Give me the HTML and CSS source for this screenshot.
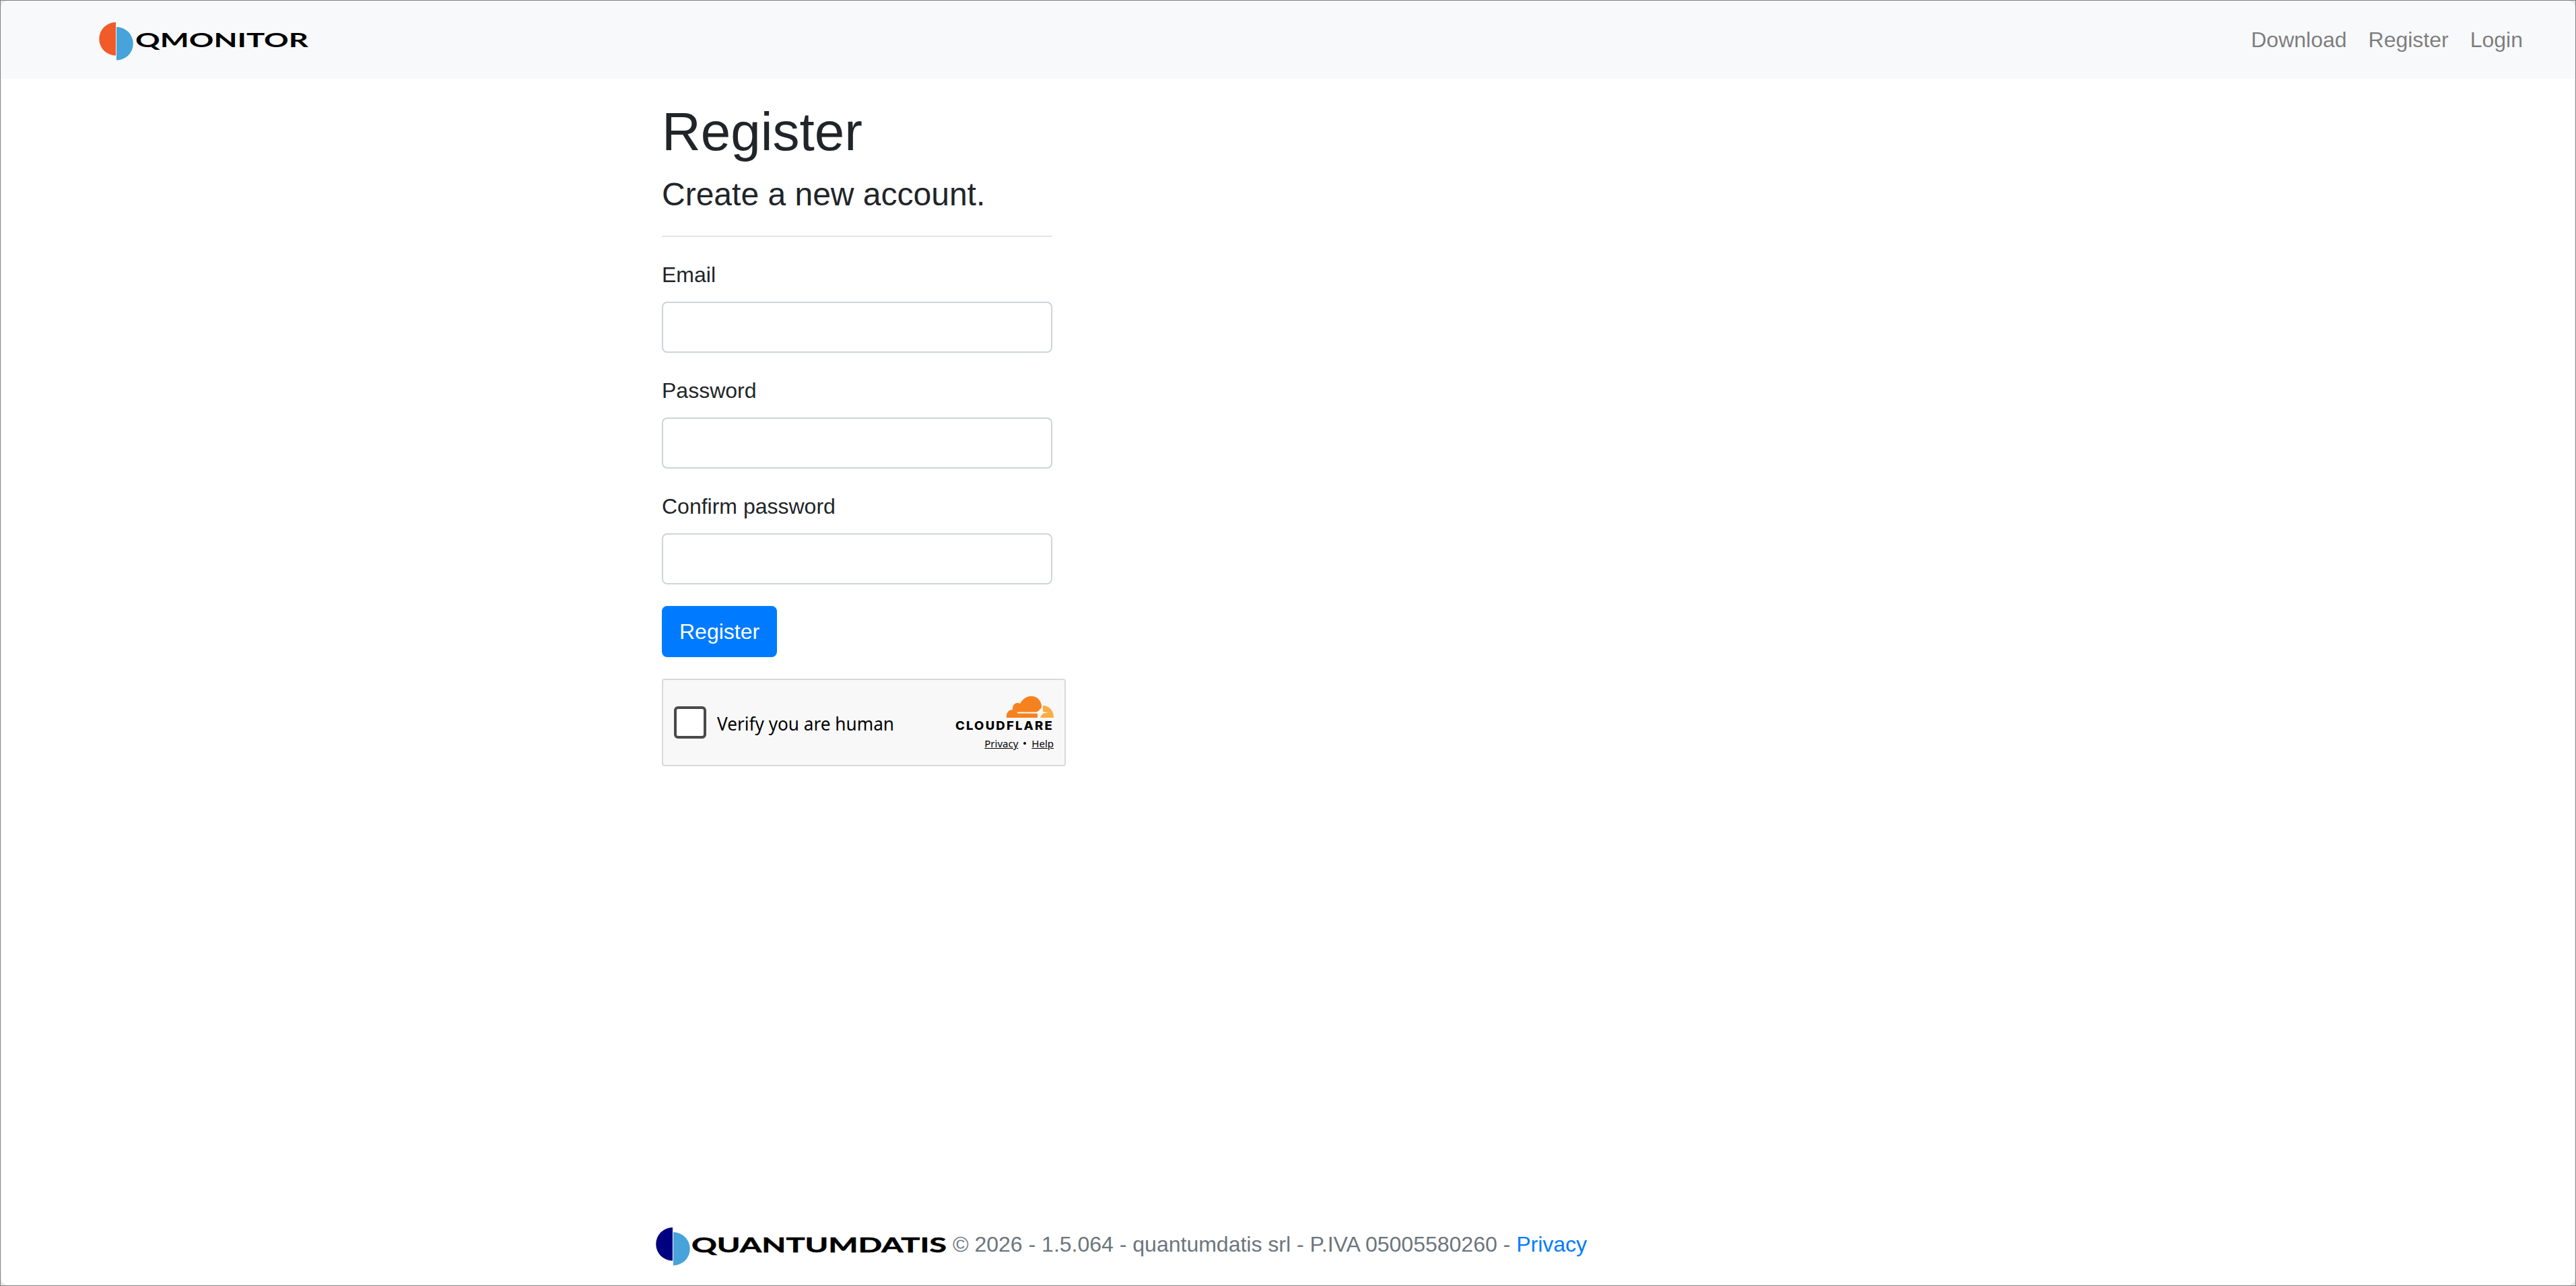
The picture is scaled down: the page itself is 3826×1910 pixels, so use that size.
FILE: index.html
```
<!DOCTYPE html>
<html lang="en">
<head>
    <meta charset="utf-8">
    <meta name="viewport" content="width=device-width, initial-scale=1">
    <title>Register</title>
    <link rel="stylesheet" href="styles.css">
</head>
<body>
    <div class="page">
        <header class="navbar">
            <a class="brand" href="#">
                <svg class="brand-logo" width="320" height="64" viewBox="0 -3.5 320 64">
                    <path d="M25 2.5A24.7 24.7 0 0 0 25 52z" fill="#f15a29"/>
                    <path d="M26 9.5A24.7 24.7 0 0 1 26 59z" fill="#47a3d9"/>
                    <text class="logo-text logo-text-light" x="54" y="39.5" textLength="257" lengthAdjust="spacingAndGlyphs">QMONITOR</text>
                </svg>
            </a>
            <nav class="nav">
                <a class="nav-link" href="#">Download</a>
                <a class="nav-link" href="#">Register</a>
                <a class="nav-link" href="#">Login</a>
            </nav>
        </header>

        <main class="container main">
            <h1>Register</h1>
            <form class="register-form">
                <h4>Create a new account.</h4>
                <hr>
                <div class="form-group">
                    <label for="email">Email</label>
                    <input class="form-control" type="email" id="email">
                </div>
                <div class="form-group">
                    <label for="password">Password</label>
                    <input class="form-control" type="password" id="password">
                </div>
                <div class="form-group">
                    <label for="confirm">Confirm password</label>
                    <input class="form-control" type="password" id="confirm">
                </div>
                <button type="button" class="btn">Register</button>
            </form>

            <!-- Human check -->
            <div class="turnstile">
                <label class="verify">
                    <span class="verify-box"></span>
                    <svg width="280" height="48" viewBox="0 0 280 48">
                        <text class="verify-text" x="0" y="35.5" textLength="263" lengthAdjust="spacingAndGlyphs">Verify you are human</text>
                    </svg>
                </label>
                <div class="cf">
                    <svg class="cf-logo" width="160" height="58" viewBox="-6 0 160 58">
                        <path d="M78 32c-1-7 3-12 9-12-1-8 6-12 11-9 4-7 9-11 17-11 8 0 14 6 15 14 0 5-3 9-6 13v5z" fill="#f6821f"/>
                        <path d="M132 14c9 0 16 7 16 18h-20c1-3 2-4 4-6z" fill="#fbad41"/>
                        <path d="M94 23.4h28c3-.4 5-2 6-5.4 1 3.4 3 5 6 5.4l6 .9-6 1c-3 .6-4.5 2-6 5.2-1-3.2-2-4.6-5-4.800l-29-.3z" fill="#f8f8f8"/>
                        <text class="cf-name" x="2" y="50.3" textLength="146" lengthAdjust="spacingAndGlyphs">CLOUDFLARE</text>
                    </svg>
                    <div class="cf-links">
                        <a href="#">Privacy</a><span class="cf-dot"></span><a href="#">Help</a>
                    </div>
                </div>
            </div>
        </main>

        <footer class="footer">
            <div class="container footer-content">
                <svg class="footer-logo" width="436" height="64" viewBox="0 -4.5 436 64">
                    <path d="M26 2.5A24.7 24.7 0 0 0 26 52z" fill="#000080"/>
                    <path d="M27 9.5A24.7 24.7 0 0 1 27 59z" fill="#47a3d9"/>
                    <text class="logo-text" x="54" y="39.2" textLength="379" lengthAdjust="spacingAndGlyphs">QUANTUMDATIS</text>
                </svg>
                <p>© 2026 - 1.5.064 - quantumdatis srl - P.IVA 05005580260 - <a href="#">Privacy</a></p>
            </div>
        </footer>
    </div>
</body>
</html>
```
FILE: styles.css
```
* {
    box-sizing: border-box;
}

html {
    font-size: 32px;
}

body {
    margin: 0;
    height: 100vh;
    border: 1px solid #808080;
    font-family: "Liberation Sans", Arial, sans-serif;
    line-height: 1.5;
    color: #212529;
    background: #eceaea;
    overflow: hidden;
}

.page {
    height: 100%;
    display: flex;
    flex-direction: column;
    background: #fff;
    border-radius: 13px;
    overflow: hidden;
}

a {
    color: #007bff;
    text-decoration: none;
}

/* Navbar */
.navbar {
    display: flex;
    justify-content: space-between;
    align-items: center;
    height: 116px;
    padding: 0 62px 0 146px;
    background: #f8f9fa;
}

.brand-logo,
.footer-logo {
    display: block;
}

.logo-text {
    font-family: Lato, sans-serif;
    font-size: 30px;
    font-weight: 700;
    fill: #000;
    stroke: #000;
    stroke-width: 0.5px;
}

.logo-text-light {
    font-size: 28.5px;
    stroke: none;
}

.nav {
    display: flex;
}

.nav-link {
    padding: 16px;
    color: rgba(0, 0, 0, 0.5);
}

/* Content */
.container {
    width: 1920px;
    margin: 0 auto;
    padding: 0 30px;
}

.main {
    flex: 1;
    padding-top: 31px;
}

h1,
h4 {
    margin: 0 0 16px;
    font-weight: 400;
    line-height: 1.2;
}

h1 {
    font-size: 80px;
}

h4 {
    font-size: 48px;
}

hr {
    margin: 32px 0;
    border: 0;
    border-top: 2px solid rgba(0, 0, 0, 0.1);
}

.register-form {
    width: 580px;
}

.form-group {
    margin-bottom: 32px;
}

.form-group label {
    display: block;
    margin-bottom: 16px;
}

.form-control {
    display: block;
    width: 100%;
    height: 76px;
    padding: 12px 24px;
    font: inherit;
    border: 2px solid #ced4da;
    border-radius: 8px;
}

.btn {
    display: block;
    height: 76px;
    padding: 0 24px;
    font: inherit;
    color: #fff;
    background: #007bff;
    border: 2px solid #007bff;
    border-radius: 8px;
}

/* Human check */
.turnstile {
    display: flex;
    justify-content: space-between;
    align-items: center;
    width: 600px;
    height: 130px;
    margin-top: 32px;
    padding: 0 10px 0 16px;
    background: #f8f8f8;
    border: 2px solid #d9d9d9;
    border-radius: 4px;
    color: #000;
}

.verify {
    display: flex;
    align-items: center;
    gap: 16px;
}

.verify-box {
    width: 48px;
    height: 48px;
    background: #fff;
    border: 4px solid #4a4a4a;
    border-radius: 6px;
}

.verify-text {
    font-family: "Noto Sans", sans-serif;
    font-size: 27.5px;
}

.cf {
    display: flex;
    flex-direction: column;
    align-items: flex-end;
    padding-top: 8px;
}

.cf-logo {
    display: block;
}

.cf-name {
    font-family: Inter, sans-serif;
    font-size: 17px;
    font-weight: 800;
    letter-spacing: 2px;
}

.cf-links {
    display: flex;
    align-items: center;
    margin: -3px 6px 0 0;
    font-family: "Noto Sans", sans-serif;
    font-size: 15px;
    line-height: 30px;
}

.cf-links a {
    color: #000;
    text-decoration: underline;
}

.cf-dot {
    width: 4px;
    height: 4px;
    margin: 0 8px;
    border-radius: 50%;
    background: #000;
}

/* Footer */
.footer {
    height: 120px;
    color: #6c757d;
}

.footer-content {
    display: flex;
    align-items: center;
    padding: 27px 20px 0;
}

.footer-content p {
    margin: 0 0 0 6px;
}
```
